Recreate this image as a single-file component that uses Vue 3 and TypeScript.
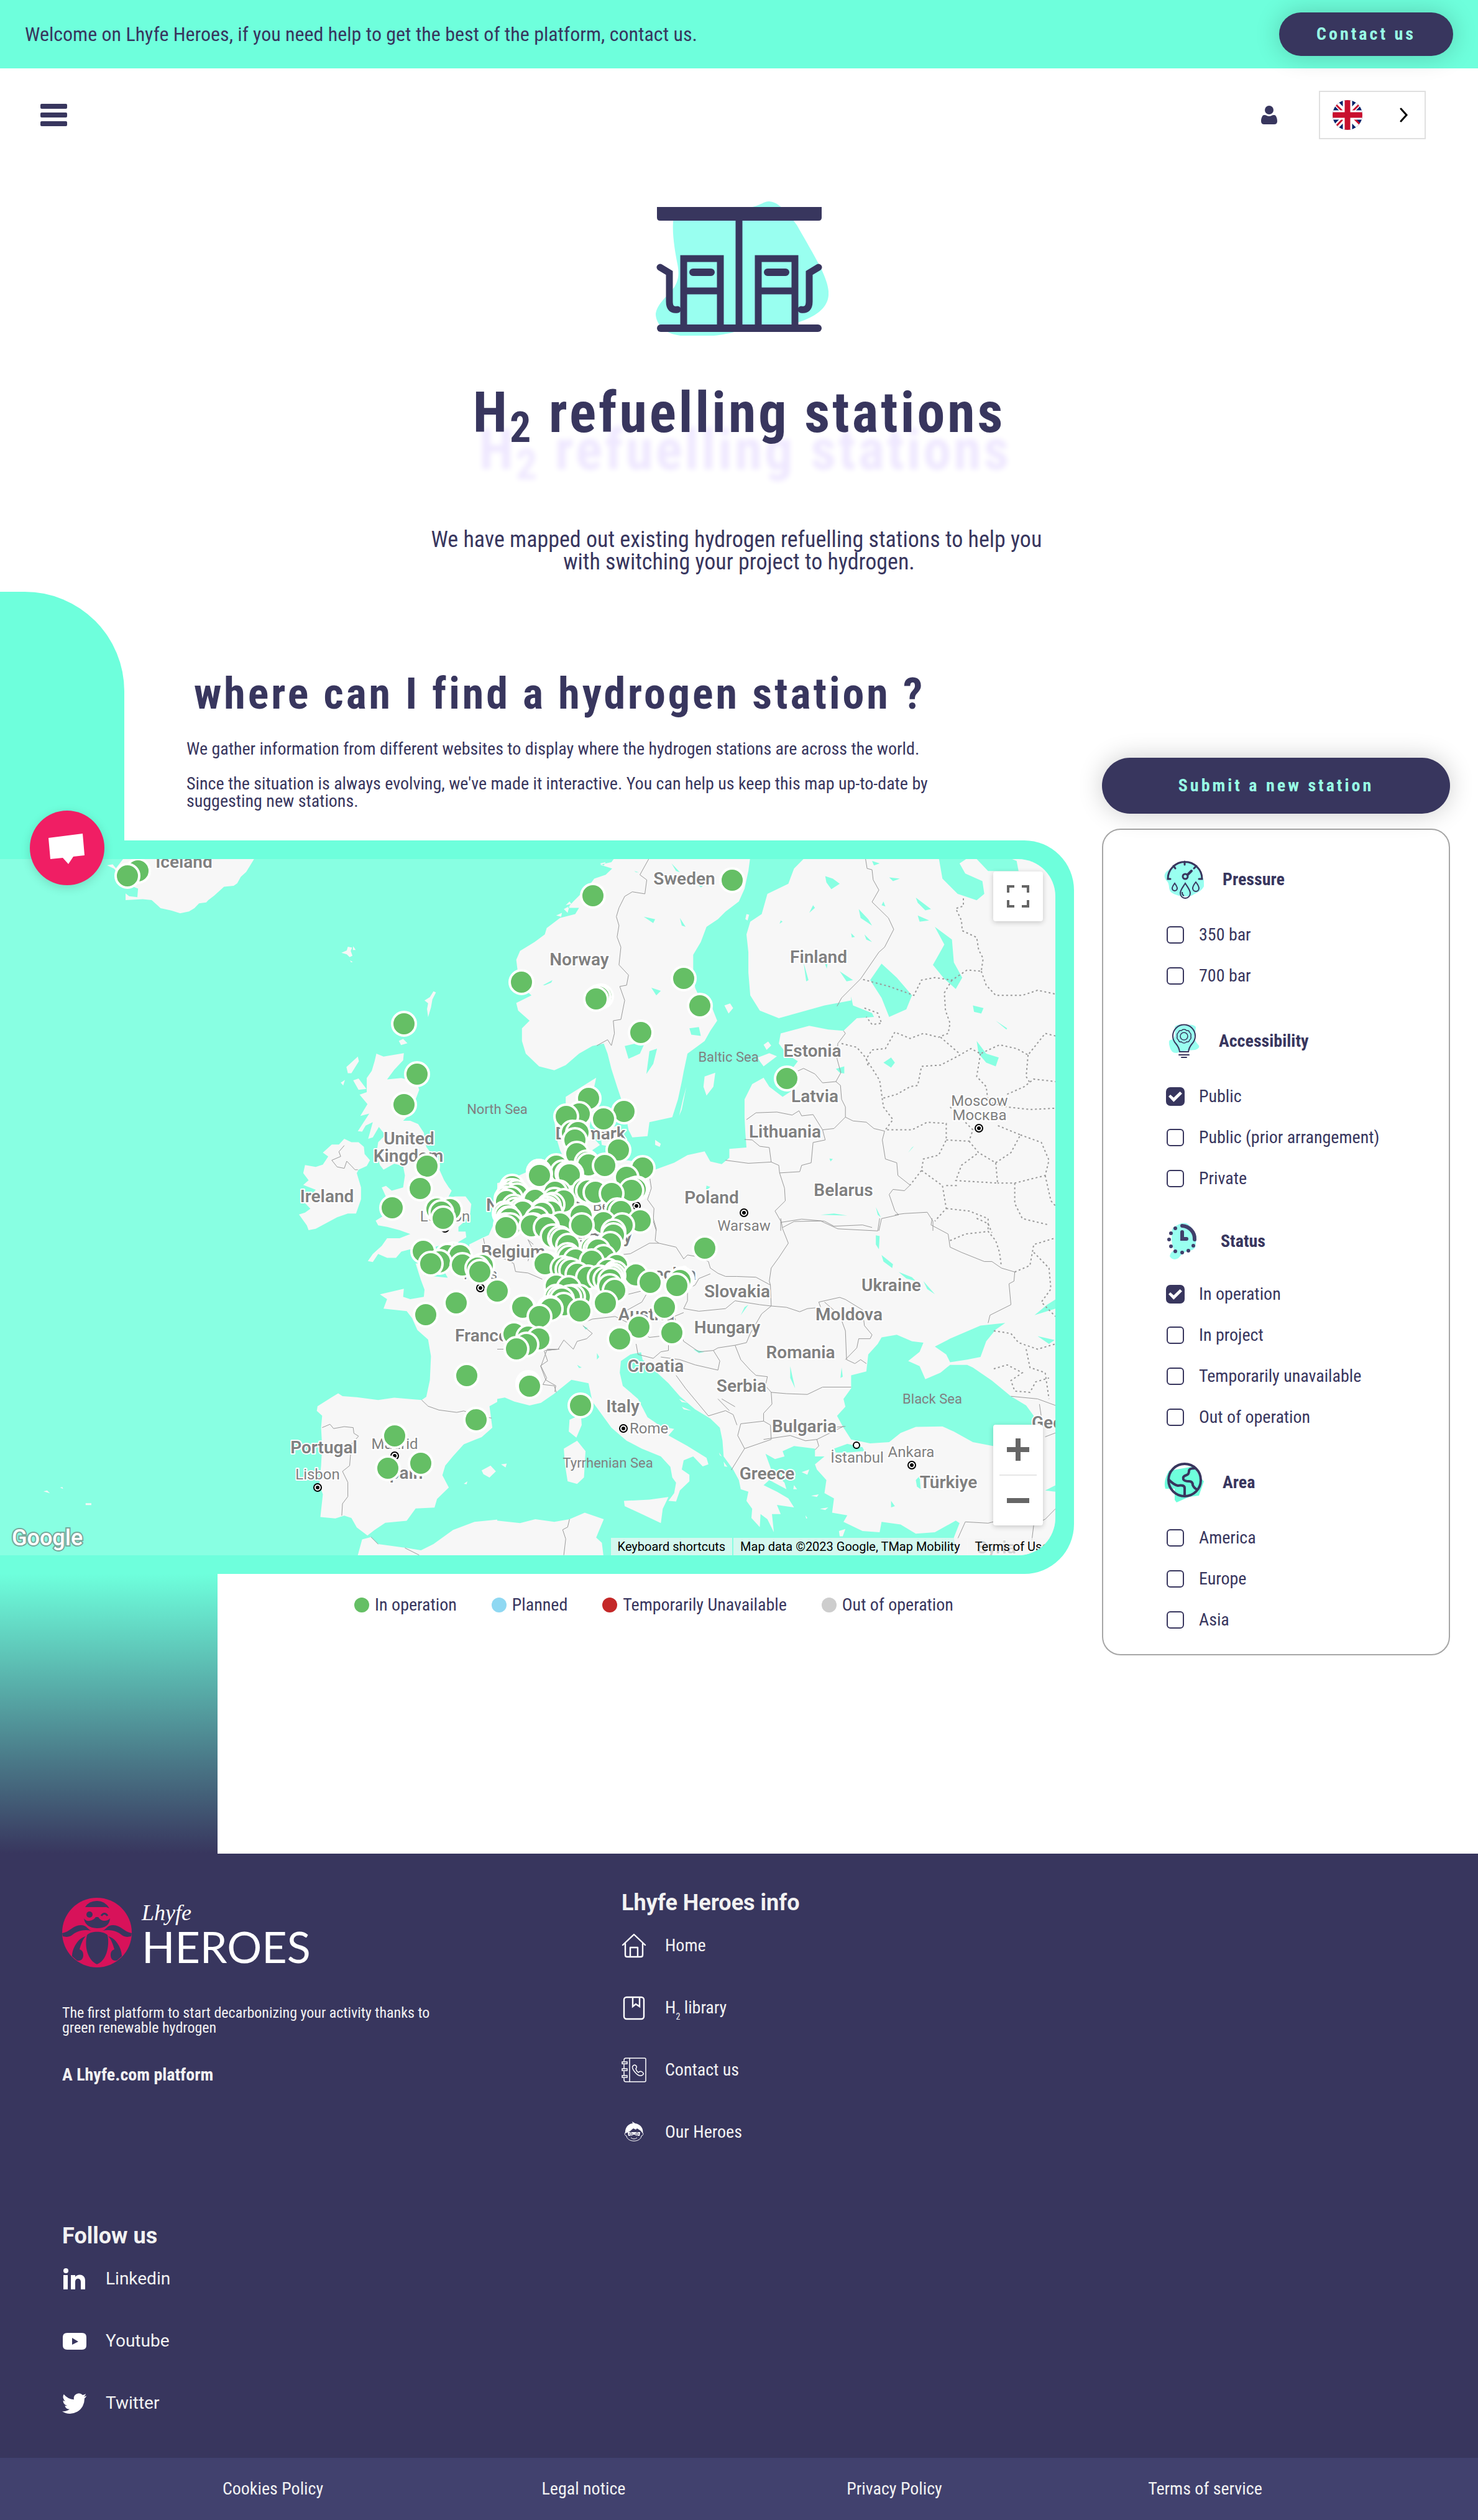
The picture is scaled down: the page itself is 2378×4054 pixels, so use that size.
<script setup lang="ts">
import { ref } from 'vue'

type Point = [number, number]

interface Tile {
  x: number
  y: number
  sx: number
  sy: number
  stations: Point[]
}

interface MapLabel {
  text: string
  x: number
  y: number
  kind: 'country' | 'city' | 'sea'
  start?: boolean
}

interface Option {
  id: string
  label: string
  checked: boolean
}

interface FilterGroup {
  id: string
  title: string
  options: Option[]
}

// The survey is stored in three tiles, each one with its own origin and scale.
const west: Tile = {
  x: 0, y: 1340, sx: 0.574, sy: 0.7653,
  stations: [
    [387, 80], [357, 90], [1461, 314], [1132, 401], [1169, 507], [1132, 571], [1197, 701], [1177, 747],
    [1099, 788], [1225, 790], [1262, 792], [1237, 797], [1243, 810], [1187, 880], [1255, 888], [1270, 886],
    [1290, 889], [1232, 901], [1207, 905], [1297, 908], [1352, 910], [1338, 915], [1345, 922], [1394, 963],
    [1279, 988], [1193, 1013], [1465, 997], [1543, 1000], [1440, 1053], [1480, 1060], [1510, 1063],
    [1475, 1076], [1447, 1084], [1308, 1141], [1480, 1157], [1484, 1163], [1334, 1234], [1106, 1268],
    [1179, 1325], [1087, 1335], [1510, 712], [1512, 720], [1437, 752], [1425, 762], [1450, 762], [1432, 768],
    [1420, 775], [1500, 772], [1440, 785], [1445, 792], [1465, 797], [1420, 803], [1428, 812], [1430, 825],
    [1418, 830], [1555, 755], [1535, 795], [1520, 800], [1505, 812], [1490, 826], [1530, 830], [1548, 848],
    [1560, 700], [1528, 905]
  ]
}

const northEast: Tile = {
  x: 800, y: 1340, sx: 0.61224, sy: 0.40816,
  stations: [
    [617, 186], [252, 247], [490, 573], [532, 681], [378, 787], [272, 645], [267, 648], [260, 654], [761, 968],
    [240, 1045], [215, 1108], [333, 1098], [182, 1116], [279, 1126], [197, 1180], [212, 1180], [204, 1210],
    [209, 1265], [318, 1249], [236, 1298], [240, 1308], [283, 1310], [382, 1320], [110, 1335], [113, 1342],
    [111, 1350], [172, 1338], [185, 1342], [195, 1342], [190, 1348], [340, 1358], [368, 1402], [362, 1405],
    [352, 1408], [228, 1408], [238, 1412], [258, 1415], [300, 1422], [162, 1415], [40, 1395], [35, 1410],
    [50, 1415], [98, 1445], [150, 1445], [175, 1450], [25, 1440], [145, 1465], [135, 1470], [130, 1480],
    [120, 1490], [140, 1495], [60, 1490], [70, 1495], [20, 1500], [220, 1510], [315, 1488], [325, 1492],
    [280, 1535], [375, 1528], [328, 1545], [222, 1545], [165, 1540], [95, 1545], [130, 1550], [30, 1520],
    [23, 1545], [305, 1570]
  ]
}

const southEast: Tile = {
  x: 800, y: 1960, sx: 0.61224, sy: 0.42092,
  stations: [
    [545, 113], [148, 68], [165, 75], [172, 82], [187, 105], [305, 65], [298, 98], [250, 115], [258, 118],
    [265, 122], [280, 148], [185, 140], [190, 150], [205, 160], [248, 165], [130, 173], [172, 190], [185, 195],
    [195, 200], [210, 215], [238, 225], [313, 180], [290, 200], [365, 216], [270, 225], [310, 210], [305, 218],
    [300, 225], [285, 232], [297, 235], [402, 244], [485, 232], [480, 238], [472, 257], [155, 258], [188, 265],
    [295, 258], [308, 275], [0, 278], [440, 340], [68, 340], [215, 300], [200, 300], [190, 302], [155, 300],
    [163, 305], [170, 310], [175, 330], [138, 343], [141, 347], [285, 323], [218, 353], [111, 375], [372, 415],
    [459, 437], [322, 461], [82, 635], [219, 715]
  ]
}

const stations: Point[] = [northEast, southEast, west].flatMap((t) =>
  t.stations.map(([x, y]): Point => [Math.round(t.x + x * t.sx), Math.round(t.y + y * t.sy)])
).sort((a, b) => a[1] - b[1])

const tileTransform = (t: Tile): string => `translate(${t.x} ${t.y}) scale(${t.sx} ${t.sy})`

const labels: MapLabel[] = [
  { text: 'Iceland', x: 296, y: 1396, kind: 'country' },
  { text: 'Sweden', x: 1101, y: 1423, kind: 'country' },
  { text: 'Norway', x: 932, y: 1553, kind: 'country' },
  { text: 'Finland', x: 1317, y: 1549, kind: 'country' },
  { text: 'North Sea', x: 800, y: 1792, kind: 'sea' },
  { text: 'United', x: 658, y: 1841, kind: 'country' },
  { text: 'Kingdom', x: 657, y: 1869, kind: 'country' },
  { text: 'Ireland', x: 526, y: 1934, kind: 'country' },
  { text: 'Estonia', x: 1307, y: 1700, kind: 'country' },
  { text: 'Baltic Sea', x: 1172, y: 1708, kind: 'sea' },
  { text: 'Latvia', x: 1311, y: 1773, kind: 'country' },
  { text: 'Lithuania', x: 1263, y: 1830, kind: 'country' },
  { text: 'Denmark', x: 950, y: 1833, kind: 'country' },
  { text: 'Moscow', x: 1576, y: 1779, kind: 'city' },
  { text: 'Москва', x: 1576, y: 1802, kind: 'city' },
  { text: 'Belarus', x: 1357, y: 1924, kind: 'country' },
  { text: 'Poland', x: 1145, y: 1936, kind: 'country' },
  { text: 'Warsaw', x: 1197, y: 1980, kind: 'city' },
  { text: 'Berlin', x: 984, y: 1948, kind: 'city' },
  { text: 'London', x: 716, y: 1965, kind: 'city' },
  { text: 'Netherlands', x: 782, y: 1948, kind: 'country', start: true },
  { text: 'Belgium', x: 774, y: 2023, kind: 'country', start: true },
  { text: 'Germany', x: 960, y: 1999, kind: 'country' },
  { text: 'Paris', x: 773, y: 2058, kind: 'city' },
  { text: 'Czechia', x: 1070, y: 2059, kind: 'country' },
  { text: 'Slovakia', x: 1186, y: 2087, kind: 'country' },
  { text: 'Ukraine', x: 1434, y: 2077, kind: 'country' },
  { text: 'Moldova', x: 1366, y: 2124, kind: 'country' },
  { text: 'Austria', x: 1040, y: 2124, kind: 'country' },
  { text: 'Hungary', x: 1170, y: 2145, kind: 'country' },
  { text: 'France', x: 732, y: 2158, kind: 'country', start: true },
  { text: 'Romania', x: 1288, y: 2185, kind: 'country' },
  { text: 'Croatia', x: 1055, y: 2207, kind: 'country' },
  { text: 'Serbia', x: 1193, y: 2239, kind: 'country' },
  { text: 'Black Sea', x: 1500, y: 2258, kind: 'sea' },
  { text: 'Italy', x: 1002, y: 2272, kind: 'country' },
  { text: 'Bulgaria', x: 1294, y: 2304, kind: 'country' },
  { text: 'Rome', x: 1013, y: 2306, kind: 'city', start: true },
  { text: 'Georgia', x: 1660, y: 2298, kind: 'country', start: true },
  { text: 'Tyrrhenian Sea', x: 978, y: 2361, kind: 'sea' },
  { text: 'İstanbul', x: 1379, y: 2353, kind: 'city' },
  { text: 'Ankara', x: 1466, y: 2344, kind: 'city' },
  { text: 'Greece', x: 1234, y: 2380, kind: 'country' },
  { text: 'Türkiye', x: 1526, y: 2394, kind: 'country' },
  { text: 'Portugal', x: 521, y: 2338, kind: 'country' },
  { text: 'Lisbon', x: 511, y: 2380, kind: 'city' },
  { text: 'Madrid', x: 635, y: 2331, kind: 'city' },
  { text: 'Spain', x: 645, y: 2379, kind: 'country' },
  { text: 'Syria', x: 1603, y: 2499, kind: 'country' }
]

const capitals: Point[] = [
  [1575, 1815], [1197, 1951], [1024, 1940], [716, 1976], [773, 2072],
  [1003, 2298], [1467, 2357], [511, 2393], [635, 2342]
]

const groups = ref<FilterGroup[]>([
  {
    id: 'pressure', title: 'Pressure',
    options: [
      { id: 'p350', label: '350 bar', checked: false },
      { id: 'p700', label: '700 bar', checked: false }
    ]
  },
  {
    id: 'access', title: 'Accessibility',
    options: [
      { id: 'public', label: 'Public', checked: true },
      { id: 'prior', label: 'Public (prior arrangement)', checked: false },
      { id: 'private', label: 'Private', checked: false }
    ]
  },
  {
    id: 'status', title: 'Status',
    options: [
      { id: 'operation', label: 'In operation', checked: true },
      { id: 'project', label: 'In project', checked: false },
      { id: 'unavailable', label: 'Temporarily unavailable', checked: false },
      { id: 'out', label: 'Out of operation', checked: false }
    ]
  },
  {
    id: 'area', title: 'Area',
    options: [
      { id: 'america', label: 'America', checked: false },
      { id: 'europe', label: 'Europe', checked: false },
      { id: 'asia', label: 'Asia', checked: false }
    ]
  }
])

const legend = [
  { label: 'In operation', tone: 'green' },
  { label: 'Planned', tone: 'blue' },
  { label: 'Temporarily Unavailable', tone: 'red' },
  { label: 'Out of operation', tone: 'grey' }
]

const policies = ['Cookies Policy', 'Legal notice', 'Privacy Policy', 'Terms of service']
</script>

<template>
  <div class="page">
    <div class="banner">
      <p>Welcome on Lhyfe Heroes, if you need help to get the best of the platform, contact us.</p>
      <button type="button" class="pill">Contact us</button>
    </div>

    <nav class="nav">
      <button type="button" class="burger" aria-label="Menu"><i></i><i></i><i></i></button>
      <a href="#" class="user" aria-label="Account">
        <svg viewBox="0 0 26 30" width="26" height="30" fill="#38365e">
          <circle cx="13" cy="7" r="7" />
          <path d="M5 15C2 15 0 20 0 25q0 5 5 5h16q5 0 5-5c0-5-2-10-5-10q-3 0-4 1-4 2-8 0-1-1-4-1z" />
        </svg>
      </a>
      <button type="button" class="lang" aria-label="Language">
        <svg viewBox="0 0 48 48" width="48" height="48">
          <defs><clipPath id="disc"><circle cx="24" cy="24" r="24" /></clipPath></defs>
          <g clip-path="url(#disc)">
            <path d="M0 0h48v48H0z" fill="#012169" />
            <path d="M0 0 48 48M48 0 0 48" stroke="#fff" stroke-width="9" />
            <path d="M3 5 20 22M31 26 48 43M45 5 28 22M20 27 3 45" stroke="#c8102e" stroke-width="3" />
            <path d="M24 0v48M0 24h48" stroke="#fff" stroke-width="15" />
            <path d="M24 0v48M0 24h48" stroke="#c8102e" stroke-width="9" />
          </g>
        </svg>
        <svg viewBox="0 0 14 24" width="14" height="24" fill="none" stroke="#000" stroke-width="3" stroke-linecap="round">
          <path d="m2 2 9 10-9 10" />
        </svg>
      </button>
    </nav>

    <header class="hero">
      <svg class="hero-icon" viewBox="1045 324 288 216" width="288" height="216">
        <path d="M1084 350C1086 336 1110 333 1140 333L1210 333C1225 330 1228 324 1238 324C1250 325 1255 333 1264 338L1282 362C1295 385 1310 410 1320 430C1330 450 1334 465 1333 475C1331 500 1305 512 1280 520C1250 527 1215 524 1185 533C1160 541 1110 545 1085 538C1068 534 1055 520 1055 505C1057 490 1070 480 1085 462C1092 450 1093 440 1090 425C1086 405 1080 370 1084 350Z" fill="#99fff0" />
        <g fill="none" stroke="#38365e" stroke-width="11">
          <path d="M1189 350V526M1100 522V416H1159V522M1100 468H1159M1220 522V416H1279V522M1220 468H1279" />
          <path d="M1062 430 1077 439V485Q1077 500 1090 498M1317 430 1302 439V485Q1302 500 1289 498" stroke-linecap="round" />
          <path d="M1115 438H1144M1235 438H1264" stroke-width="12" stroke-linecap="round" />
          <path d="M1063 528H1316" stroke-width="12" stroke-linecap="round" />
        </g>
        <path d="M1057 333H1322V350q0 5-5 5H1062q-5 0-5-5z" fill="#38365e" />
      </svg>
      <h1>H<sub>2</sub> refuelling stations</h1>
      <p>We have mapped out existing hydrogen refuelling stations to help you&nbsp;<br />with switching your project to hydrogen.</p>
    </header>

    <main class="finder">
      <section class="main-col">
        <div class="intro">
          <div class="curve"></div>
          <div class="intro-text">
            <h2>where can I find a hydrogen station ?</h2>
            <p>We gather information from different websites to display where the hydrogen stations are across the world.</p>
            <p>Since the situation is always evolving, we've made it interactive. You can help us keep this map up-to-date by<br />suggesting new stations.</p>
          </div>
        </div>

        <div class="frame">
          <button type="button" class="chat" aria-label="Open chat">
            <svg viewBox="0 0 120 120" width="120" height="120"><path fill="#fff" d="m30 44 55-7 3 35-18 2-8 12-9-10-20 2z" /></svg>
          </button>
          <div class="map">
            <svg class="map-canvas" viewBox="0 1382 1698 1120" preserveAspectRatio="xMinYMin slice">
              <g class="land" :transform="tileTransform(west)">
                <path d="M300 68 316 66 325 74 350 50H716L700 70 690 82 675 92 665 106 655 111 628 113 600 132 584 141 578 146 558 148 545 158 530 165 505 169 480 163 450 158 425 141 400 139 352 141V127L362 133 385 135 387 117 370 112 340 100 335 90 320 75Z" />
                <path d="M957 252 972 247 975 239 987 241 983 248 988 258 980 261 972 255ZM990 238 997 246 989 246ZM981 268 989 271 984 272ZM1190 352 1205 345 1215 333 1222 335 1212 350 1208 367 1200 387 1197 370 1200 358ZM1118 437 1130 433 1142 442 1124 446Z" />
                <path d="M1055 464 1075 470 1132 463 1130 478 1105 498 1085 518 1125 515 1150 520 1170 528 1175 540 1160 570 1150 590 1130 605 1150 605 1172 612 1188 630 1195 660 1215 680 1230 705 1245 730 1258 745 1266 752 1255 768 1275 764 1305 764 1321 780 1318 800 1300 818 1285 828 1285 838 1305 838 1307 850 1280 862 1240 866 1220 870 1195 875 1180 882 1165 885 1150 875 1125 880 1110 893 1085 893 1060 885 1045 902 1031 900 1045 885 1070 868 1085 852 1120 852 1150 843 1120 835 1085 828 1060 825 1053 815 1085 800 1098 790 1085 770 1070 745 1082 742 1098 752 1130 745 1135 720 1130 700 1105 695 1075 708 1065 698 1055 675 1060 650 1080 635 1062 618 1045 640 1032 643 1045 608 1025 615 1015 628 1003 627 1035 590 1010 595 1030 570 1008 550 1028 545 1028 515 1042 500 1050 480ZM971 492 1003 470 1006 480 985 505 975 505ZM955 525 967 519 962 531ZM990 520 1005 516 1027 538 1005 540Z" />
                <path d="M930 655 950 655 965 643 985 650 1005 650 1020 660 1022 675 1037 688 1028 700 1005 708 1000 715 1012 745 1012 770 998 800 975 800 945 808 915 820 885 832 865 835 860 825 838 802 855 798 870 790 855 778 868 765 885 750 850 740 865 730 850 715 855 698 885 702 905 697 920 680 905 672Z" />
                <path d="M1568 690 1500 705 1440 725 1410 745 1395 790 1385 820 1370 845 1350 852 1315 865 1318 885 1290 905 1240 915 1255 935 1190 930 1185 905 1165 905 1180 940 1190 960 1188 975 1150 980 1130 975 1132 958 1065 970 1085 980 1075 1000 1140 1005 1155 1020 1170 1045 1200 1065 1208 1100 1205 1150 1195 1185 1182 1192 1150 1190 1105 1187 1060 1192 1000 1186 960 1184 948 1178 930 1186 890 1205 888 1215 903 1225 900 1250 903 1290 900 1330 895 1370 905 1390 898 1438 940 1441 965 1435 985 1440 1000 1460 1030 1477 1050 1465 1080 1450 1140 1446 1165 1420 1218 1418 1225 1400 1258 1376 1240 1350 1248 1330 1270 1310 1300 1285 1350 1270 1380 1250 1372 1205 1415 1187 1450 1190 1485 1204 1520 1192 1568 1172Z" />
                <path d="M1003 1518 1015 1485 1040 1480 1060 1495 1140 1503 1180 1508 1215 1495 1270 1465 1330 1448 1400 1443 1480 1445 1568 1438V1525H1003ZM1350 1340 1375 1330 1390 1342 1372 1355 1355 1348ZM1405 1326 1422 1331 1410 1334ZM1300 1368 1310 1363 1308 1369ZM122 1384 132 1382 140 1388ZM168 1376 175 1375 177 1379ZM240 1409H256V1413H240Z" />
              </g>
              <g class="land" :transform="tileTransform(northEast)">
                <path d="M310 95 300 115 270 125 302 140 285 165 255 180 240 210 220 240 200 270 185 295 215 295 205 320 165 335 130 375 125 400 98 430 60 465 50 500 55 560 60 600 90 640 50 670 55 700 85 740 65 770 65 820 75 870 110 920 150 935 180 915 215 870 250 840 280 830 290 870 300 930 315 1000 335 1090 345 1170 355 1200 395 1195 400 1140 460 1120 475 1050 485 980 490 940 500 870 545 820 560 780 578 740 565 690 535 660 520 610 515 540 515 480 535 430 550 370 580 340 600 310 635 270 650 220 660 150 665 95ZM270 120 285 115 280 128ZM175 300 190 288 185 315ZM155 325 170 315 168 330ZM190 270 180 285 195 280Z" />
                <path d="M545 960 573 945 568 1000 550 1035 542 1000ZM497 1000 485 1090 478 1115 488 1050ZM597 680 612 672 620 690 608 712ZM685 885 715 868 735 880 700 920 690 900ZM700 835 712 822 720 838 708 855ZM415 1210 430 1225 427 1237 415 1229ZM655 320 662 322 658 345 652 340Z" />
                <path d="M810 95 780 140 765 200 710 240 695 320 665 350 655 400 660 470 660 550 665 640 690 700 740 730 800 705 860 680 930 660 930 645 935 680 985 710 990 725 945 730 910 780 870 775 820 760 745 790 740 830 760 870 790 900 775 930 790 950 780 1010 750 1040 715 1000 700 965 670 990 650 1050 650 1120 652 1180 655 1240 610 1245 610 1280 590 1305 560 1295 545 1255 500 1270 465 1300 410 1330 385 1300 340 1290 300 1310 250 1300 200 1330 100 1310 60 1360 0 1380V1568H1470V95Z" />
                <path d="M260 965 180 1040 180 1065 195 1090 170 1110 150 1130 155 1200 165 1250 190 1330 300 1310 265 1290 250 1250 270 1230 240 1180 250 1100 265 1060 235 1030 255 1000ZM270 1180 320 1150 330 1190 310 1240 275 1230Z" />
              </g>
              <g class="water" :transform="tileTransform(northEast)">
                <path d="M1160 95 1170 180 1210 240 1260 265 1280 240 1275 190 1230 160 1215 120 1240 95ZM1255 95 1290 150 1370 150 1365 110 1340 95ZM1010 515 1050 570 1090 640 1075 695 1030 725 1010 650 980 580ZM1150 370 1195 420 1200 510 1222 570 1205 615 1175 575 1145 520 1160 480 1175 440ZM862 170 882 180 900 200 878 222 865 195ZM950 300 975 340 985 365 955 335ZM900 545 935 580 918 585ZM335 840 390 820 375 870 345 890ZM400 860 420 850 410 910 392 950ZM505 770 530 765 535 800 510 795ZM405 610 430 622 418 640ZM1250 680 1278 690 1272 712 1253 705ZM1260 820 1285 870 1318 885 1310 920 1285 905 1265 870ZM1015 905 1035 885 1045 905 1035 925ZM985 110 1005 120 990 128ZM1030 175 1058 180 1040 190ZM1100 255 1140 300 1125 305 1105 275ZM1105 325 1135 345 1110 350ZM830 285 835 295 820 315ZM805 510 818 580 812 585ZM860 510 868 515 866 535ZM458 120 480 155 470 150ZM520 190 540 210 535 215ZM385 330 415 340 410 355ZM480 335 495 370 485 365ZM890 930 912 920 912 948 900 945ZM1015 270 1020 290 1010 285ZM930 395 940 410 932 412ZM965 400 985 430 970 420ZM745 345 750 350 742 358Z" />
                <path d="M850 1505 885 1500 920 1508ZM995 1475 1008 1515 1000 1505ZM873 1283 882 1285 876 1295ZM550 1390 560 1395 548 1410ZM1095 1235 1080 1260 1090 1240ZM1310 740 1340 770 1338 775ZM360 150 365 155 372 155ZM120 600 145 580 142 590 125 600Z" />
              </g>
              <g :transform="tileTransform(southEast)">
                <path class="land" d="M0 0H1470V1300H0Z" />
                <path class="water" d="M0 690 20 685 45 700 85 715 115 705 150 670 195 617 240 630 250 700 270 740 300 800 340 850 380 880 430 910 455 950 460 990 470 1010 465 1050 450 1080 470 1082 480 1040 505 1005 505 980 485 960 490 925 515 910 540 948 555 940 550 915 500 870 450 830 465 805 430 795 395 760 370 690 330 640 322 590 325 545 350 520 378 512 382 540 420 590 450 630 480 680 520 730 560 765 585 800 592 850 595 910 620 960 635 1000 640 1035 660 1045 655 1080 670 1110 668 1145 690 1180 692 1130 710 1150 727 1200 722 1130 745 1130 735 1095 780 1105 765 1070 735 1045 700 1020 715 1000 760 1035 755 1010 720 960 705 900 730 920 755 910 750 890 780 870 835 880 835 910 860 910 835 940 840 960 865 1000 860 1050 885 1070 880 1125 920 1135 910 1160 960 1195 1005 1200 1010 1160 1060 1170 1100 1205 1150 1200 1205 1155 1215 1165 1200 1220 1210 1300H280L275 1240 260 1220 280 1150 230 1125 190 1150 150 1160 100 1150 60 1165 0 1155Z" />
                <path class="water" d="M1010 455 1050 445 1090 470 1120 475 1110 510 1080 545 1110 565 1125 615 1165 590 1190 560 1235 560 1250 570 1300 620 1350 680 1390 715 1410 755 1405 790 1350 870H1303L1250 855 1200 815 1170 795 1100 797 1060 820 1030 855 980 860 930 845 910 800 893 755 915 720 910 690 930 650 930 600 970 585 975 520 1000 480ZM1335 400 1310 425 1285 470 1270 530 1235 540 1190 550 1180 520 1150 490 1190 460 1230 435 1270 410ZM885 880 920 862 960 875 965 890 920 895 890 895ZM1467 1020V1045L1440 1040ZM1055 205 1090 225 1100 240 1075 230ZM995 65 1005 68 1003 118 995 100ZM1010 140 1040 175 1038 190 1015 165ZM1120 240 1150 290 1130 270ZM770 565 775 600 783 650 770 610ZM905 570 908 605 902 610ZM660 330 640 370 650 340ZM515 500 545 510 530 515ZM1100 1000 1110 985 1113 1035 1103 1025ZM1035 1080 1045 1100 1035 1105ZM1445 330 1467 310V345L1412 370ZM225 410 238 420 232 425ZM210 560 222 570 215 572ZM262 515 268 530 262 540ZM1420 450 1465 465 1450 480Z" />
                <path class="land" d="M175 880 210 850 232 890 228 990 210 1015 185 1005 178 940ZM190 770 220 750 222 790 208 838 188 815ZM333 1080 400 1075 450 1065 435 1110 430 1165 380 1130 335 1100ZM898 1195 915 1187 908 1215 900 1215ZM10 940 25 937 22 952ZM690 1020 750 1075 760 1085 735 1060ZM800 970 820 960 815 980ZM825 1060 845 1055 840 1065ZM780 1020 788 1035 778 1035ZM848 1110 870 1105 862 1115ZM810 1135 815 1145 812 1148ZM583 895 590 910 585 905ZM478 690 500 705 485 702ZM485 720 510 735 490 730ZM595 930 605 950 597 948ZM700 1090 708 1105 702 1105Z" />
              </g>
              <g class="border" :transform="tileTransform(west)">
                <path d="M965 657 950 670 955 680 930 688 945 702 965 705 972 690 985 700 995 708 1003 708M903 1250 925 1243 935 1252 965 1248 990 1250 992 1262 1005 1268 985 1285 980 1330 960 1342 975 1365 975 1395 960 1410 958 1435M1182 1192 1200 1205 1230 1213 1280 1218 1300 1215 1340 1225 1378 1230M1355 852 1360 870 1400 890 1440 905 1445 922 1480 925 1520 938M1568 1085 1525 1088 1535 1110 1515 1120 1530 1150 1558 1162 1555 1175M1480 900 1490 870 1480 855 1495 865M1060 1495 1040 1480M1135 1503 1175 1518" />
              </g>
              <g class="border" :transform="tileTransform(northEast)">
                <path d="M398 103 375 165 393 185 388 240 355 232 335 250 320 295 313 330 320 365 315 410 325 450 320 520 345 560 340 600 322 605 335 660 325 735 305 740 308 790 300 838 290 815 262 838M968 103 972 140 985 145 988 185 1003 225 985 272 1028 335 1042 380 1018 450 1003 470 955 575 905 650 893 683M910 780 915 790 895 830 893 890 903 945 890 980 855 985 835 950 805 928 790 938M890 980 902 995 905 1050 915 1080 915 1120 885 1165 855 1170 830 1110 800 1115 793 1095 775 1112 735 1100 680 1103 655 1130M855 1170 862 1210 830 1220 825 1300 800 1310 795 1335 742 1340 740 1310 720 1297 660 1302 600 1290M720 1297 715 1240 690 1235 670 1210 650 1208M742 1340 755 1400 757 1450 730 1490 745 1530 745 1568M915 1120 935 1135 970 1140 990 1165 1018 1175 1012 1210 1020 1285 1050 1300 1053 1350 1085 1388 1070 1410 1040 1405 1030 1425 1045 1490 1055 1505 1010 1520 1003 1568M745 1535 800 1522 860 1530 885 1550 960 1545 985 1555M1045 1505 1070 1500 1130 1495 1145 1530 1145 1568M400 1350 405 1400 395 1445 412 1480 410 1530 418 1568" />
              </g>
              <g class="border" :transform="tileTransform(southEast)">
                <path d="M745 0 750 40 765 95 740 150 720 190 715 240 718 255 680 225 630 222 600 222 580 210 560 190 555 165 520 145 500 140 490 155 470 110 425 95 415 85 418 40 410 0M425 95 400 95 350 135 332 138M750 35 780 12 850 10 895 40 1000 48 1005 0M560 212 530 230 520 255 500 270 500 315 490 345 530 355 600 345 625 315 690 330 720 335M718 255 720 335 695 365 665 440 655 475 625 485 580 495 568 505 530 510 490 470 465 375 490 360M330 360 380 320 400 270 345 290M225 400 250 385 310 375 345 400 400 455 430 450 470 455M0 500 160 500 175 465 200 500 210 470 235 460 250 440 225 410M160 500 130 505 115 565 130 610 120 635 150 640 155 665M365 480 370 520 410 535 430 510 450 505 450 470M470 600 495 650 555 755M430 530 480 540 520 560 580 580 585 545 568 505M625 485 640 540 665 580 680 600 710 605 705 640 720 665 760 670 815 673 855 645 930 645M720 665 722 710 700 745 700 775 640 785 632 830 650 880 720 845 718 790 700 775M700 845 770 830 810 850 840 845 910 795M840 845 845 870 835 885M555 755 600 735 620 750 630 790M580 690 610 735M590 690 625 720M720 335 760 340 795 357 815 345 850 340 845 320 900 302 915 310 960 350 965 410 985 445 980 460 950 460 945 495 915 540M860 320 900 370 915 430 918 540 940 555 955 540 970 555M915 795 890 798M650 880 615 962M1143 0 1140 25 1185 60 1190 110 1220 130 1280 165 1300 165 1325 190 1360 205 1358 240 1345 250 1350 330 1295 370 1290 400M1350 680 1420 690 1467 715M1425 710 1430 760M1440 835 1467 820M1210 1225 1230 1160 1290 1165 1330 1150 1410 1170 1440 1150 1467 1110M1410 1170 1405 1230M190 1150 185 1180 172 1190 180 1225 175 1287" />
              </g>
              <g class="border region" :transform="tileTransform(northEast)">
                <path d="M1225 258V288L1205 298 1220 345 1222 385 1260 412 1265 460 1277 495 1272 545 1235 540 1195 580 1150 570 1115 580 1095 640 1030 605 955 575M1272 545 1285 600 1310 640 1380 640 1420 620 1467 635M1195 580 1175 630 1178 700 1190 750 1185 790 1160 805 1120 790 1085 810 1045 785 1020 850 985 855 970 890 975 920M905 830 945 845 965 880 1005 975 1015 1080 1040 1130 1020 1170 1090 1170 1130 1140 1180 1145 1180 1210 1160 1270 1120 1285 1115 1330 1085 1388M1015 1045 1050 1030 1085 1000 1105 995 1115 920 1165 915 1210 880 1245 850 1270 870 1320 835 1365 850 1395 875 1440 790 1467 800M1165 805 1215 870M1270 870 1260 960 1285 1000 1290 1060 1340 1080 1400 1090 1467 1085M1340 1030 1385 1000 1410 970 1467 980M1395 875 1390 960 1400 985M1180 1210 1240 1215 1250 1170 1190 1080M1240 1215 1265 1260 1310 1300 1315 1380 1205 1370 1220 1310 1265 1260M1310 1300 1350 1260 1375 1190 1310 1150M1375 1190 1430 1220 1450 1290 1440 1350 1360 1380 1315 1380M1115 1330 1170 1390 1180 1480 1150 1530M1180 1480 1240 1490 1290 1520 1290 1568M1180 1390 1210 1390M1360 1380 1360 1460 1380 1520 1450 1545M1440 1350 1455 1450 1467 1470M965 690 1000 710 1010 750 985 755 970 725" />
              </g>
              <g class="border region" :transform="tileTransform(southEast)">
                <path d="M1190 85 1230 60 1290 50 1310 85 1320 130 1325 185M1260 0 1290 20 1300 55M1360 205 1400 180 1410 100 1467 75M1410 130 1450 190 1455 270 1430 320 1467 375M1305 430 1350 440 1370 475 1420 500 1467 480M1390 500 1400 570 1440 590 1450 690M1305 575 1340 560 1380 590 1350 620 1360 660 1400 665 1415 625 1450 610" />
              </g>
              <g v-for="(c, i) in capitals" :key="'c' + i" class="capital">
                <circle :cx="c[0]" :cy="c[1]" r="6" />
                <circle :cx="c[0]" :cy="c[1]" r="3" class="core" />
              </g>
              <circle class="town" cx="1378" cy="2325" r="5" />
              <text v-for="(l, i) in labels" :key="i" :x="l.x" :y="l.y" :class="[l.kind, { start: l.start }]">{{ l.text }}</text>
              <circle v-for="(s, i) in stations" :key="'s' + i" class="station" :cx="s[0]" :cy="s[1]" r="19" />
            </svg>
            <span class="provider">Google</span>
            <button type="button" class="control full" aria-label="Toggle fullscreen view">
              <svg viewBox="0 0 36 36" width="36" height="36" fill="none" stroke="#666" stroke-width="4"><path d="M2 12V2h10M24 2h10v10M34 24v10H24M12 34H2V24" /></svg>
            </button>
            <div class="control zoom">
              <button type="button" aria-label="Zoom in"><svg viewBox="0 0 36 36" width="36" height="36" stroke="#666" stroke-width="8"><path d="M18 0v36M0 18h36" /></svg></button>
              <button type="button" aria-label="Zoom out"><svg viewBox="0 0 36 36" width="36" height="36" stroke="#666" stroke-width="8"><path d="M0 18h36" /></svg></button>
            </div>
            <div class="credits">
              <button type="button">Keyboard shortcuts</button>
              <span>Map data ©2023 Google, TMap Mobility</span>
              <a href="#">Terms of Use</a>
            </div>
          </div>
        </div>

        <div class="below">
          <div class="fade"></div>
          <ul class="legend">
            <li v-for="item in legend" :key="item.label"><i :class="item.tone"></i>{{ item.label }}</li>
          </ul>
        </div>
      </section>

      <aside class="side">
        <button type="button" class="pill wide">Submit a new station</button>
        <form class="filters">
          <fieldset v-for="group in groups" :key="group.id" :class="group.id">
            <legend>
              <svg v-if="group.id === 'pressure'" viewBox="0 0 64 62" width="64" height="62" fill="none" stroke="#38365e" stroke-width="3">
                <path d="M8 15C14 10 22 6 32 4 44 2 52 8 56 16 62 26 66 34 64 42 60 50 52 52 46 56 38 60 20 58 12 52 6 48 10 38 4 33-2 26 0 20 8 15Z" fill="#99fff0" stroke="none" />
                <path d="M10 30H6a27 27 0 0 1 55 0h-5M33 2v5M15 9l3 4M52 9l-4 4" stroke-linecap="round" />
                <circle cx="34" cy="26" r="4" />
                <path d="m38 23 6-6" stroke-width="4" stroke-linecap="round" />
                <path d="M34 37c-5 8-8 11-8 16a8 8 0 0 0 16 0c0-5-3-8-8-16zM17 37c-3 4-4 6-4 8a4 4 0 0 0 8 0c0-2-1-4-4-8zM51 35c-4 5-5 8-5 10a5 5 0 0 0 10 0c0-2-1-5-5-10zM29 51q0 5 3 6" stroke-width="2" />
              </svg>
              <svg v-else-if="group.id === 'access'" viewBox="0 0 64 62" width="64" height="62" fill="none" stroke="#38365e" stroke-width="2">
                <path d="M17 8Q22 2 32 6 46 2 51 8 50 20 48 24 50 32 56 38 58 42 50 45 30 46 20 50 11 50 9 40 6 30 10 29 20 28 17 8Z" fill="#99fff0" stroke="none" />
                <path d="M25 48q-1-7-6-13a18 18 0 1 1 26 0q-5 6-6 13zM24 53h16M28 57h8" stroke-linecap="round" />
                <path d="M32 12q3 0 4 2 4-1 5 3 3 2 2 6 1 4-2 6-1 4-5 3-1 2-4 2t-4-2q-4 1-5-3-3-2-2-6-1-4 2-6 1-4 5-3 1-2 4-2z" stroke-width="1.5" />
                <circle cx="32" cy="23" r="6" stroke-width="1.5" />
              </svg>
              <svg v-else-if="group.id === 'status'" viewBox="0 0 58 60" width="58" height="60">
                <path d="M25 2Q35-2 41 5 50 14 52 22 51 34 50 40 45 46 38 45 30 48 23 57 14 62 9 54 10 48 16 44 10 30 13 17 11 10 17 6Z" fill="#99fff0" />
                <g fill="none" stroke="#413f6b" stroke-linecap="round">
                  <path d="M29 5a21 21 0 0 1 20 22" stroke-width="6" />
                  <path d="M29 15v11h7" stroke-width="6" />
                  <path d="M18 9h0M11 17h0M8 27h0M11 38h0M18 46h0M29 48h0M39 45h0M47 37h0" stroke-width="6" />
                </g>
              </svg>
              <svg v-else viewBox="0 0 64 64" width="64" height="64" fill="none" stroke="#38365e" stroke-width="4">
                <path d="M8 13 48 6 58 24 64 30 56 53 40 55 20 64 17 60V42L2 42Q-2 30 8 13Z" fill="#6effdc" stroke="none" />
                <circle cx="33" cy="28" r="26" />
                <path d="M7 27Q16 36 22 37 33 35 33 41V54M50 9Q40 9 40 13 40 19 36 20 29 22 31 27 33 30 40 30 46 30 46 36 48 41 53 43" />
              </svg>
              {{ group.title }}
            </legend>
            <label v-for="option in group.options" :key="option.id" :for="option.id">
              <input :id="option.id" v-model="option.checked" type="checkbox" />
              {{ option.label }}
            </label>
          </fieldset>
        </form>
      </aside>
    </main>

    <footer class="footer">
      <div class="brand">
        <a href="#" class="logo" aria-label="Lhyfe Heroes">
          <svg viewBox="0 0 112 112" width="112" height="112">
            <circle cx="56" cy="56" r="56" fill="#d8125a" />
            <g fill="#38365e">
              <path d="M37 15Q43 5 56 5q13 0 20 12l-5-2H42z" />
              <ellipse cx="44" cy="27" rx="5" ry="5" />
              <path d="M35 33Q38 38 44 37 51 36 54 31H58Q62 37 68 37 74 37 77 33 76 49 56 49 37 48 35 33Z" />
              <path d="M0 57C12 55 18 44 30 44 40 44 42 52 47 53 32 50 22 55 16 60 10 64 5 63 1 62ZM38 62C25 65 16 82 16 94L24 101C31 102 34 98 34 92 34 86 31 84 28 83 30 75 34 65 38 62Z" />
              <path transform="matrix(-1 0 0 1 112 0)" d="M0 57C12 55 18 44 30 44 40 44 42 52 47 53 32 50 22 55 16 60 10 64 5 63 1 62ZM38 62C25 65 16 82 16 94L24 101C31 102 34 98 34 92 34 86 31 84 28 83 30 75 34 65 38 62Z" />
              <path d="M40 60C46 53 66 53 73 60 77 80 70 102 56 107 42 101 35 80 40 60Z" />
            </g>
            <path d="M63 29q5-7 10 0" fill="none" stroke="#38365e" stroke-width="3" />
          </svg>
          <span class="wordmark"><em>Lhyfe</em><b>HEROES</b></span>
        </a>
        <p>The first platform to start decarbonizing your activity thanks to<br />green renewable hydrogen</p>
        <strong>A Lhyfe.com platform</strong>
      </div>

      <section>
        <h3>Lhyfe Heroes info</h3>
        <ul>
          <li><a href="#">
            <svg viewBox="0 0 40 40" width="40" height="40" fill="none" stroke="#fff" stroke-width="2.400" stroke-linecap="round" stroke-linejoin="round"><path d="M2 19 20 2l18 17M6 17v18q0 3 3 3h22q3 0 3-3V17M14 37V23h12v14" /></svg>
            Home</a></li>
          <li><a href="#">
            <svg viewBox="0 0 40 40" width="40" height="40" fill="none" stroke="#fff" stroke-width="2.400"><rect x="4" y="3" width="32" height="35" rx="4" /><path d="M18 3v15l5-4 6 4V3" /></svg>
            <span>H<sub>2</sub> library</span></a></li>
          <li><a href="#">
            <svg viewBox="0 0 40 40" width="40" height="40" fill="none" stroke="#fff" stroke-width="1.500"><path d="M4 6V4q0-3 3-3h30q2 0 2 2v34q0 2-2 2H7q-3 0-3-3v-3M4 11v7M4 22v7M13 1v38" /><rect x="1" y="7" width="8" height="3" /><rect x="1" y="18" width="8" height="3" /><rect x="1" y="29" width="8" height="3" /><path d="M18 14q3-4 6 0 1 2-1 4 1 4 4 6 3-3 6-1 4 3 1 5-5 4-12-4-6-7-4-10z" /></svg>
            Contact us</a></li>
          <li><a href="#">
            <svg viewBox="0 0 40 40" width="40" height="40"><path d="M6 22C5 12 12 6 18 6l-1-3 5 3c8 1 14 8 12 16l-3-4-6-4-2 2-4-2-6 5z" fill="#fff" /><path d="M10 20h20l-1 6h-5l-3-2h-2l-3 2h-5z" fill="#fff" /><path d="M7 20c-3 1-2 6 1 6 1 11 23 11 24 0 3 0 4-5 1-6M15 29q5 4 10 0" fill="none" stroke="#fff" stroke-width="1" /><circle cx="15" cy="23" r="2" fill="none" stroke="#38365e" /><circle cx="25" cy="23" r="2" fill="none" stroke="#38365e" /></svg>
            Our Heroes</a></li>
        </ul>
      </section>

      <section class="social">
        <h3>Follow us</h3>
        <ul>
          <li><a href="#">
            <svg viewBox="0 0 40 40" width="40" height="40" fill="#fff"><circle cx="6" cy="7" r="4" /><path d="M2 14h7v23H2zM14 14h7v3c3-5 16-6 16 6v14h-7V25c0-7-9-7-9 0v12h-7z" /></svg>
            Linkedin</a></li>
          <li><a href="#">
            <svg viewBox="0 0 40 40" width="40" height="40" fill="#fff" fill-rule="evenodd"><path d="M8 7h24q7 0 7 7v13q0 7-7 7H8q-7 0-7-7V14q0-7 7-7zm8 8v11l10-5z" /></svg>
            Youtube</a></li>
          <li><a href="#">
            <svg viewBox="0 0 24 24" width="40" height="40" fill="#fff"><path d="M23.6 4.9a9.7 9.7 0 0 1-2.8.8 4.9 4.9 0 0 0 2.1-2.7 9.7 9.7 0 0 1-3.1 1.2 4.9 4.9 0 0 0-8.4 4.4A13.9 13.9 0 0 1 1.6 3.500a4.9 4.9 0 0 0 1.500 6.600 4.900 4.900 0 0 1-2.200-.6v.1a4.900 4.900 0 0 0 3.900 4.800 4.900 4.900 0 0 1-2.200.1 4.900 4.900 0 0 0 4.600 3.400A9.800 9.800 0 0 1 0 19.900a13.900 13.900 0 0 0 21.500-12.400 9.900 9.900 0 0 0 2.100-2.600z" /></svg>
            Twitter</a></li>
        </ul>
      </section>
    </footer>

    <div class="policies">
      <a v-for="item in policies" :key="item" href="#">{{ item }}</a>
    </div>
  </div>
</template>

<style>
html,
body {
  background: #fff;
}
</style>

<style scoped>
.page {
  --ink: #38365e;
  --mint: #6effdc;
  --condensed: "Roboto Condensed", Roboto, sans-serif;
  color: var(--ink);
  font-family: var(--condensed);
  font-size: 28px;
  line-height: 28px;
}
.page * {
  box-sizing: border-box;
}
h1, h2, h3, p, ul, fieldset {
  margin: 0;
  padding: 0;
}
ul {
  list-style: none;
}
a {
  color: inherit;
  text-decoration: none;
}
button {
  border: 0;
  padding: 0;
  background: none;
  font: inherit;
  color: inherit;
  cursor: pointer;
}
svg {
  display: block;
  flex: none;
}

.banner {
  display: flex;
  align-items: center;
  justify-content: space-between;
  height: 110px;
  padding: 0 40px;
  background: var(--mint);
  font-size: 32px;
}
.pill {
  width: 280px;
  height: 70px;
  border-radius: 45px;
  background: var(--ink);
  color: #99ffe6;
  font-size: 28px;
  font-weight: 700;
  letter-spacing: 4px;
  box-shadow: 0 0 40px rgba(0, 0, 0, 0.2);
}
.pill.wide {
  width: 100%;
  height: 90px;
}

.nav {
  display: flex;
  align-items: center;
  height: 150px;
  padding: 0 84px 0 65px;
}
.burger {
  display: grid;
  gap: 6px;
  margin-right: auto;
}
.burger i {
  width: 43px;
  height: 8px;
  border-radius: 2px;
  background: var(--ink);
}
.lang {
  display: flex;
  align-items: center;
  justify-content: space-between;
  width: 172px;
  height: 78px;
  margin-left: 67px;
  padding: 0 26px 0 20px;
  border: 2px solid #e0e0e0;
}

.hero {
  padding: 64px 0 30px;
  text-align: center;
}
.hero-icon {
  margin: 0 auto;
}
h1 {
  margin: 80px 0 140px;
  font-size: 90px;
  line-height: 90px;
  letter-spacing: 4px;
  text-shadow: 10px 60px 8px #efe8ff;
}
h1 sub {
  font-size: 68px;
  line-height: 0;
  vertical-align: -16px;
}
.hero p {
  font-size: 36px;
  line-height: 36px;
}

.finder {
  display: flex;
  gap: 45px;
  padding-right: 45px;
}
.main-col {
  flex: 1;
  min-width: 0;
}
.intro {
  display: flex;
  min-height: 400px;
}
.curve {
  width: 200px;
  flex: none;
  background: var(--mint);
  border-top-right-radius: 160px;
}
.intro-text {
  padding: 129px 0 0 100px;
}
h2 {
  margin: 0 0 40px;
  padding-left: 12px;
  font-size: 70px;
  line-height: 70px;
  letter-spacing: 4px;
}
.intro-text p + p {
  margin-top: 28px;
}
.frame {
  position: relative;
  padding: 30px 30px 30px 0;
  background: var(--mint);
  border-radius: 0 80px 80px 0;
}
.chat {
  position: absolute;
  z-index: 2;
  top: -48px;
  left: 48px;
  border-radius: 50%;
  background: #f01e64;
  box-shadow: 0 4px 16px rgba(0, 0, 0, 0.15);
}
.map {
  position: relative;
  height: 1120px;
  overflow: hidden;
  border-radius: 0 60px 60px 0;
  background: #88ffe2;
  font-family: Roboto, sans-serif;
}
.map-canvas {
  width: 100%;
  height: 100%;
}
.land {
  fill: #f7f7f7;
}
.water {
  fill: #88ffe2;
}
.border {
  fill: none;
  stroke: #9a9a9a;
  stroke-width: 1;
}
.border path {
  vector-effect: non-scaling-stroke;
}
.border.region path {
  stroke-width: 2;
  stroke-dasharray: 3 4;
}
.capital circle {
  fill: #fff;
  stroke: #000;
  stroke-width: 2;
}
.capital .core {
  fill: #000;
  stroke: none;
}
.town {
  fill: #fff;
  stroke: #000;
  stroke-width: 2;
}
.map-canvas text {
  fill: #808080;
  stroke: #fff;
  stroke-width: 4;
  stroke-linejoin: round;
  paint-order: stroke;
  text-anchor: middle;
  font-size: 24px;
}
.map-canvas .country {
  font-size: 28px;
  font-weight: 600;
}
.map-canvas .sea {
  font-size: 22px;
  stroke: none;
}
.map-canvas .start {
  text-anchor: start;
}
.station {
  fill: #65bf65;
  stroke: #fff;
  stroke-width: 4;
}
.provider {
  position: absolute;
  left: 19px;
  bottom: 10px;
  color: #fff;
  font: 500 36px/36px Roboto, sans-serif;
  -webkit-text-stroke: 4px #77a69a;
  paint-order: stroke;
}
.control {
  position: absolute;
  right: 20px;
  background: #fff;
  border-radius: 4px;
  box-shadow: 0 2px 8px rgba(0, 0, 0, 0.2);
}
.control.full {
  top: 20px;
  display: grid;
  place-items: center;
  width: 80px;
  height: 80px;
}
.control.zoom {
  bottom: 48px;
  width: 80px;
  padding: 0 10px;
}
.control.zoom button {
  display: grid;
  place-items: center;
  width: 60px;
  height: 80px;
}
.control.zoom button + button {
  border-top: 2px solid #e6e6e6;
  height: 82px;
}
.credits {
  position: absolute;
  right: 0;
  bottom: 0;
  display: flex;
  gap: 2px;
  color: #000;
  font-size: 20px;
  line-height: 28px;
}
.credits > * {
  padding: 0 11px;
  background: rgba(245, 245, 245, 0.7);
}

.below {
  display: flex;
}
.fade {
  width: 350px;
  height: 450px;
  flex: none;
  background: linear-gradient(var(--mint), var(--ink));
}
.legend {
  display: flex;
  flex: 1;
  justify-content: center;
  gap: 56px;
  padding: 36px 0 0 26px;
}
.legend li {
  display: flex;
  align-items: center;
  gap: 9px;
  height: 28px;
  white-space: nowrap;
}
.legend i {
  width: 24px;
  height: 24px;
  border-radius: 50%;
}
.green { background: #65bf65; }
.blue { background: #8fd8f2; }
.red { background: #c42828; }
.grey { background: #cdcdcd; }

.side {
  width: 560px;
  flex: none;
  padding-top: 267px;
}
.filters {
  margin-top: 24px;
  padding: 48px 0 22px 98px;
  border: 2px solid #a6a6a6;
  border-radius: 30px;
}
fieldset {
  border: 0;
  min-width: 0;
}
fieldset + fieldset {
  margin-top: 40px;
}
fieldset legend {
  display: flex;
  align-items: center;
  gap: 30px;
  height: 64px;
  margin-bottom: 24px;
  padding: 0;
  font-weight: 700;
}
.status legend {
  height: 56px;
}
.access legend {
  gap: 24px;
}
.status legend {
  gap: 33px;
}
label {
  display: flex;
  align-items: center;
  gap: 24px;
  height: 66px;
  padding-left: 4px;
}
input {
  display: grid;
  place-items: center;
  appearance: none;
  width: 28px;
  height: 28px;
  margin: 0;
  border: 2px solid var(--ink);
  border-radius: 6px;
}
input:checked {
  background: var(--ink);
  box-shadow: 0 0 0 1px var(--ink);
}
input:checked::before {
  content: "";
  width: 22px;
  height: 18px;
  background: #fff;
  clip-path: polygon(0 50%, 14% 34%, 38% 60%, 84% 6%, 100% 24%, 38% 98%);
}

.footer {
  display: grid;
  grid-template-columns: 900px 1fr;
  row-gap: 98px;
  padding: 60px 100px 38px;
  background: var(--ink);
  color: #f2f2f2;
}
.brand {
  padding-top: 11px;
}
.logo {
  display: flex;
  gap: 16px;
}
.wordmark {
  display: grid;
  align-content: start;
  padding-top: 2px;
  color: #fff;
}
.wordmark em {
  font: italic 36px/44px "Liberation Serif", serif;
}
.wordmark b {
  font: 400 70px/64px Lato, sans-serif;
}
.brand p {
  margin: 61px 0 50px;
  font-size: 24px;
  line-height: 24px;
}
.brand strong {
  display: block;
}
h3 {
  font: 700 36px/38px Roboto, sans-serif;
}
.footer li a {
  display: flex;
  align-items: center;
  gap: 30px;
  height: 100px;
}
.footer sub {
  font-size: 14px;
  line-height: 0;
  vertical-align: -10px;
}
.social {
  font-family: Roboto, sans-serif;
}
.policies {
  display: grid;
  grid-template-columns: repeat(4, 1fr);
  align-items: center;
  height: 100px;
  padding: 0 189px;
  background: #41416e;
  color: #f2f2f2;
  text-align: center;
}
</style>
